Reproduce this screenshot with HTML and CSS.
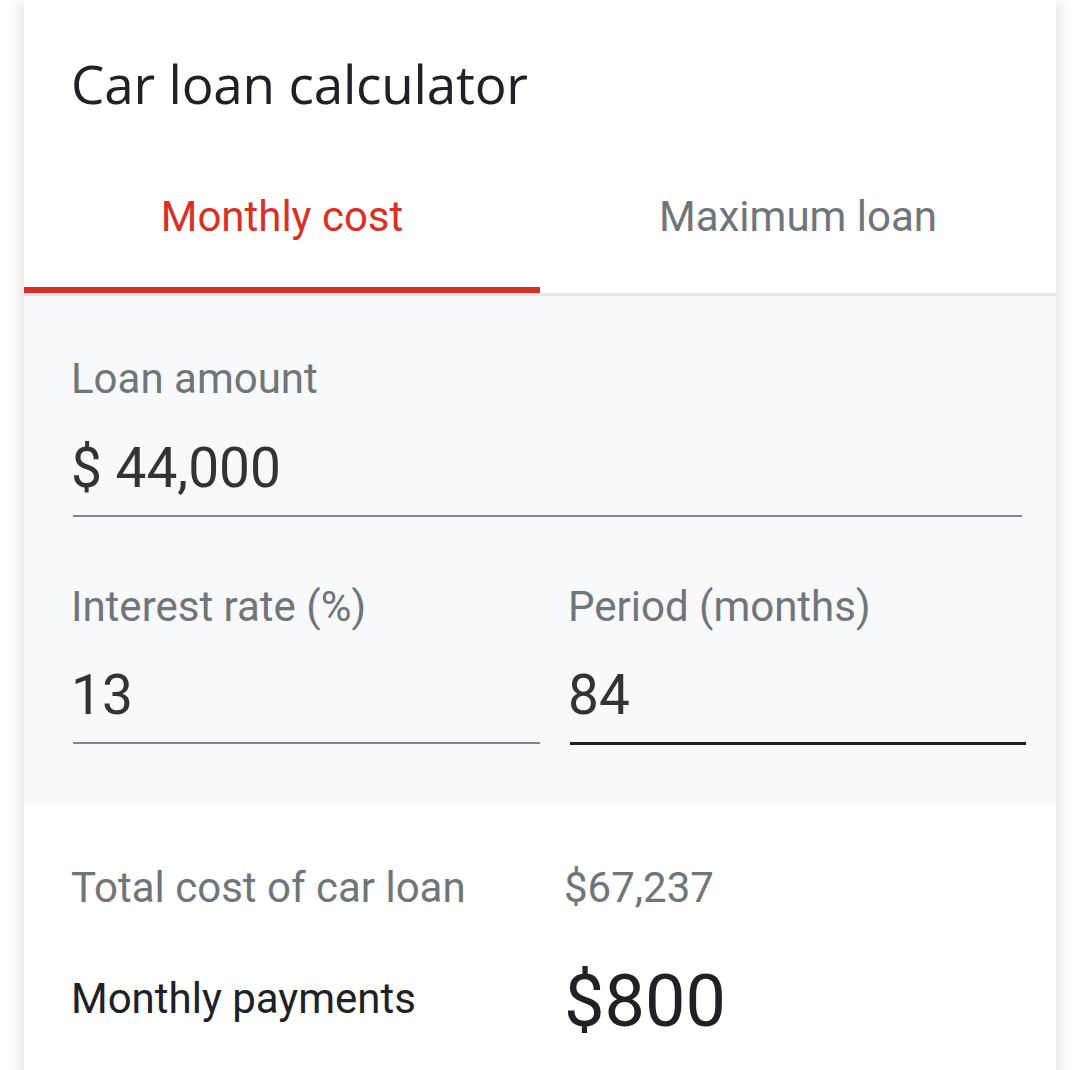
FILE: index.html
```html
<!DOCTYPE html>
<html lang="en">
<head>
<meta charset="utf-8">
<title>Car loan calculator</title>
<link rel="stylesheet" href="styles.css">
</head>
<body>
<div class="card">
  <h1 class="title">Car loan calculator</h1>
  <div class="tabs">
    <div class="tab active">Monthly cost</div>
    <div class="tab">Maximum loan</div>
  </div>
  <div class="inputs">
    <div class="field field-wide">
      <div class="label">Loan amount</div>
      <div class="value">$ 44,000</div>
    </div>
    <div class="row">
      <div class="field">
        <div class="label">Interest rate (%)</div>
        <div class="value">13</div>
      </div>
      <div class="field focused">
        <div class="label">Period (months)</div>
        <div class="value">84</div>
      </div>
    </div>
  </div>
  <div class="results">
    <div class="result-row">
      <div class="r-label muted">Total cost of car loan</div>
      <div class="r-value muted">$67,237</div>
    </div>
    <div class="result-row main">
      <div class="r-label lifted">Monthly payments</div>
      <div class="r-value big">$800</div>
    </div>
  </div>
</div>
</body>
</html>
```

FILE: styles.css
```css
html, body {
  margin: 0;
  padding: 0;
  background: #ffffff;
}

body {
  font-family: Roboto, "Liberation Sans", Arial, sans-serif;
  color: #202124;
}

.card {
  margin-left: 24px;
  width: 1032px;
  min-height: 1100px;
  background: #ffffff;
  box-shadow: 0 2px 18px rgba(32, 33, 36, 0.18);
  border-radius: 0 0 16px 16px;
}

.title {
  margin: 0;
  padding: 52px 0 0 47px;
  font-family: "Open Sans", "Noto Sans", Roboto, sans-serif;
  font-weight: 400;
  font-size: 53px;
  line-height: 64px;
  color: #202124;
  letter-spacing: -0.2px;
}

.tabs {
  display: grid;
  grid-template-columns: 516px 516px;
  margin-top: 2px;
  border-bottom: 3px solid #e3e5e8;
}

.tab {
  padding: 74px 0 45px;
  text-align: center;
  font-size: 42px;
  line-height: 50px;
  color: #70757a;
  border-bottom: 6px solid transparent;
}

.tab.active {
  color: #d93025;
  border-bottom-color: #d93025;
}

.inputs {
  background: #f8f9fa;
  padding: 58px 30px 60px 49px;
}

.field-wide {
  margin-right: 4px;
}

.label {
  font-size: 42px;
  line-height: 50px;
  color: #70757a;
  text-indent: -2px;
}

.value {
  margin-top: 32px;
  padding-bottom: 15px;
  font-size: 55px;
  line-height: 64px;
  color: #333333;
  text-indent: -2px;
  border-bottom: 2px solid #80868b;
}

.row {
  display: grid;
  grid-template-columns: 467px 1fr;
  column-gap: 30px;
  margin-top: 65px;
}

.row .value {
  margin-top: 31px;
}

.focused .value {
  border-bottom: 3px solid #202124;
}

.results {
  padding: 58px 30px 40px 49px;
}

.result-row {
  display: grid;
  grid-template-columns: 492px 1fr;
  align-items: center;
}

.result-row.main {
  margin-top: 47px;
}

.r-label {
  font-size: 42px;
  line-height: 50px;
  color: #202124;
  text-indent: -2px;
}

.r-label.lifted {
  margin-bottom: 6px;
}

.r-value {
  font-size: 42px;
  line-height: 50px;
  text-indent: -1px;
}

.muted {
  color: #70757a;
}

.big {
  font-size: 72px;
  line-height: 84px;
  color: #202124;
}
```
